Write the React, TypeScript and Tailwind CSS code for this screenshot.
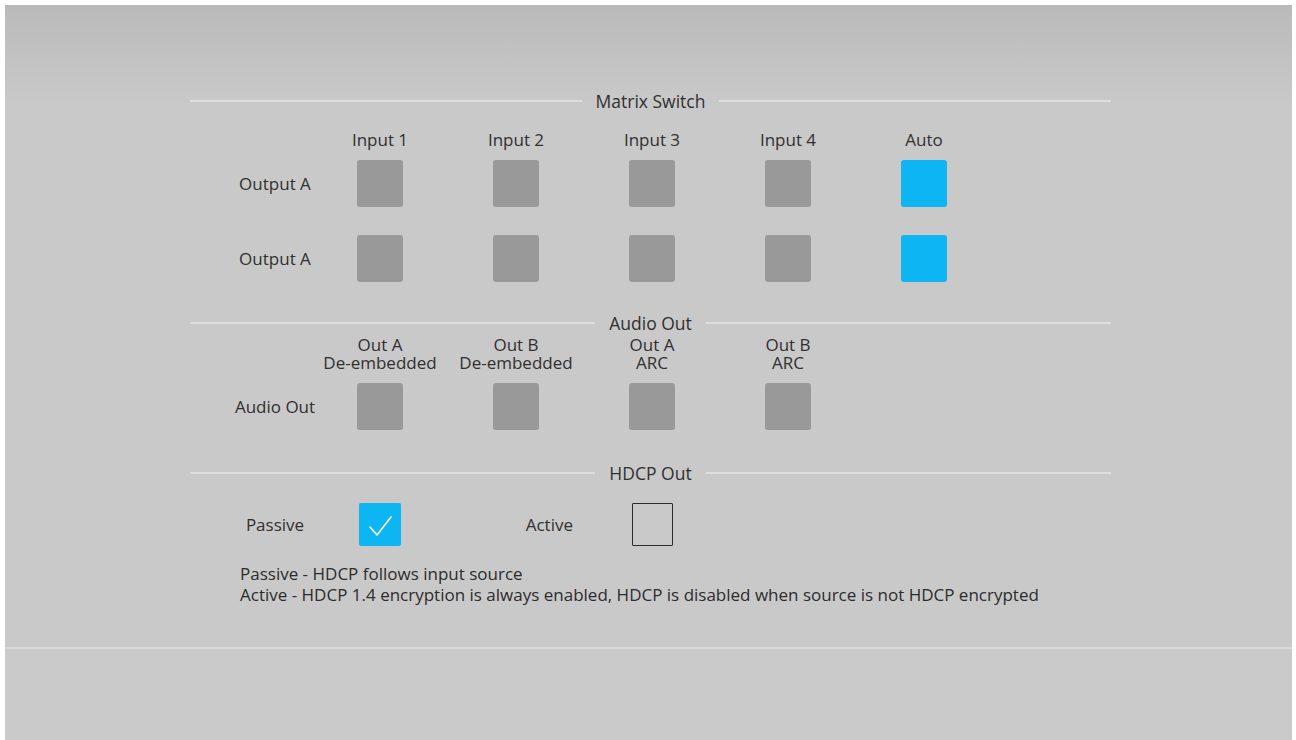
import React from "react";

const font = { fontFamily: '"Open Sans", "Noto Sans", sans-serif' };

function SectionHeader({ title }: { title: string }) {
  return (
    <div className="flex items-center h-[20px]">
      <div className="flex-1 h-[2px] bg-[#dedede]" />
      <div className="px-[14px] text-[17.5px] leading-[20px] text-[#303030] whitespace-nowrap">{title}</div>
      <div className="flex-1 h-[2px] bg-[#dedede]" />
    </div>
  );
}

function GraySq() {
  return <div className="w-[46px] h-[47px] rounded-[3px] bg-[#999999]" />;
}
function BlueSq() {
  return <div className="w-[46px] h-[47px] rounded-[3px] bg-[#0db6f3]" />;
}

function Label({ text }: { text: string }) {
  return (
    <div className="w-[74px] flex justify-center whitespace-nowrap text-[17px] text-[#303030]">{text}</div>
  );
}

function Col({ children }: { children?: React.ReactNode }) {
  return <div className="w-[136px] flex justify-center">{children}</div>;
}

export default function App() {
  const inputs = ["Input 1", "Input 2", "Input 3", "Input 4", "Auto"];
  const audio = [
    ["Out A", "De-embedded"],
    ["Out B", "De-embedded"],
    ["Out A", "ARC"],
    ["Out B", "ARC"],
  ];
  return (
    <div className="w-[1296px] h-[740px] bg-white pt-[5px] pl-[5px] pr-[4px] overflow-hidden" style={font}>
      <div className="h-[735px] flex flex-col bg-[linear-gradient(to_bottom,#b9b9b9_0px,#c2c2c2_50px,#c9c9c9_100px,#c9c9c9_100%)]">
        <div className="h-[642px] pl-[185px] pr-[181px] pt-[86px] flex flex-col">
          <SectionHeader title="Matrix Switch" />
          <div className="flex pl-[48px] mt-[19px] h-[20px] items-center text-[17px] text-[#303030]">
            <div className="w-[74px]" />
            {inputs.map((t) => (
              <Col key={t}>
                <span className="whitespace-nowrap">{t}</span>
              </Col>
            ))}
          </div>
          {[0, 1].map((r) => (
            <div key={r} className={`flex pl-[48px] items-center ${r === 0 ? "mt-[10px]" : "mt-[28px]"}`}>
              <Label text="Output A" />
              <Col><GraySq /></Col>
              <Col><GraySq /></Col>
              <Col><GraySq /></Col>
              <Col><GraySq /></Col>
              <Col><BlueSq /></Col>
            </div>
          ))}
          <div className="mt-[31px]">
            <SectionHeader title="Audio Out" />
          </div>
          <div className="flex pl-[48px] mt-[3px] text-[17px] leading-[18px] text-[#303030]">
            <div className="w-[74px]" />
            {audio.map((a, i) => (
              <Col key={i}>
                <div className="flex flex-col items-center whitespace-nowrap">
                  <span>{a[0]}</span>
                  <span>{a[1]}</span>
                </div>
              </Col>
            ))}
          </div>
          <div className="flex pl-[48px] items-center mt-[11px]">
            <Label text="Audio Out" />
            <Col><GraySq /></Col>
            <Col><GraySq /></Col>
            <Col><GraySq /></Col>
            <Col><GraySq /></Col>
          </div>
          <div className="mt-[33px]">
            <SectionHeader title="HDCP Out" />
          </div>
          <div className="flex pl-[48px] items-center mt-[20px]">
            <Label text="Passive" />
            <Col>
              <div className="w-[42px] h-[43px] rounded-[2px] bg-[#0db6f3] flex items-center justify-center">
                <svg width="30" height="30" viewBox="0 0 30 30" fill="none">
                  <path d="M5 17 L12 25 L26 7" stroke="white" strokeWidth="1.6" strokeLinecap="round" strokeLinejoin="round" />
                </svg>
              </div>
            </Col>
            <div className="w-[136px] flex justify-end pr-[11px] text-[17px] text-[#303030]">Active</div>
            <Col>
              <div className="w-[41px] h-[43px] border-[1.5px] border-[#2b2b2b] rounded-[1px]" />
            </Col>
          </div>
          <div className="mt-[17px] pl-[50px] text-[17px] leading-[21px] text-[#2c2c2c] whitespace-nowrap">
            <div>Passive - HDCP follows input source</div>
            <div>Active - HDCP 1.4 encryption is always enabled, HDCP is disabled when source is not HDCP encrypted</div>
          </div>
        </div>
        <div className="h-[2px] bg-[#dadada]" />
        <div className="flex-1 bg-[#cacaca]" />
      </div>
    </div>
  );
}
